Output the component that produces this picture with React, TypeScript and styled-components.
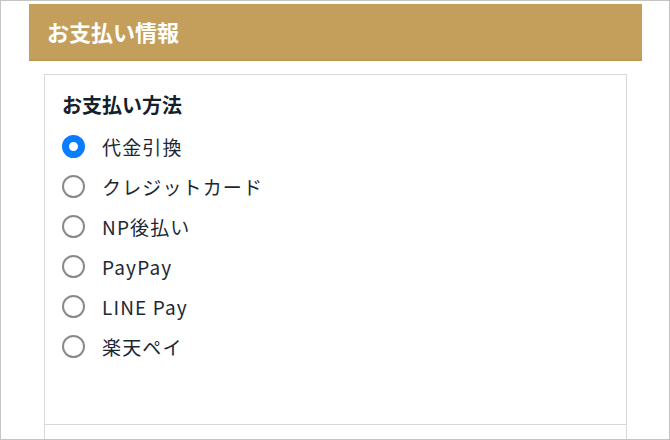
import styled, { createGlobalStyle } from 'styled-components';

const GlobalStyle = createGlobalStyle`
  html, body {
    margin: 0;
    padding: 0;
    background: #fff;
  }
  body {
    font-family: "Noto Sans CJK JP", "Noto Sans", sans-serif;
  }
`;

const Frame = styled.div`
  box-sizing: border-box;
  width: 670px;
  height: 440px;
  border: 1px solid #c4c4c4;
  overflow: hidden;
  padding: 3px 27px 0 28px;
  background: #fff;
`;

const SectionHeader = styled.h2`
  margin: 0;
  height: 57px;
  box-sizing: border-box;
  display: flex;
  align-items: center;
  padding: 0 0 2px 18px;
  background-color: #c49f5c;
  border-bottom: 2px solid #c19752;
  color: #fff;
  font-size: 22px;
  font-weight: 700;
`;

const Card = styled.div`
  margin: 13px 15px 0 15px;
  border: 1px solid #d8d8d8;
  padding: 17px 0 0 17px;
  height: 351px;
  box-sizing: border-box;
`;

const NextCard = styled.div`
  margin: 0 15px;
  border: 1px solid #d8d8d8;
  border-top: none;
  height: 40px;
`;

const CardTitle = styled.h3`
  margin: 0 0 8px 0;
  font-size: 20px;
  font-weight: 700;
  color: #14202c;
  line-height: 26px;
`;

const OptionList = styled.div`
  display: flex;
  flex-direction: column;
`;

const Option = styled.label`
  display: flex;
  align-items: center;
  height: 40px;
  gap: 17px;
  color: #1c2833;
  font-size: 19px;
  letter-spacing: 0.06em;
`;

const Radio = styled.span<{ $checked?: boolean }>`
  box-sizing: border-box;
  width: 23px;
  height: 23px;
  border-radius: 50%;
  flex: none;
  background: #fff;
  border: ${(p) => (p.$checked ? '7px solid #0a7cff' : '2px solid #8a8a8a')};
`;

const methods = ['代金引換', 'クレジットカード', 'NP後払い', 'PayPay', 'LINE Pay', '楽天ペイ'];

export default function App() {
  return (
    <>
      <GlobalStyle />
      <Frame>
        <SectionHeader>お支払い情報</SectionHeader>
        <Card>
          <CardTitle>お支払い方法</CardTitle>
          <OptionList>
            {methods.map((m, i) => (
              <Option key={m}>
                <Radio $checked={i === 0} />
                {m}
              </Option>
            ))}
          </OptionList>
        </Card>
        <NextCard />
      </Frame>
    </>
  );
}
